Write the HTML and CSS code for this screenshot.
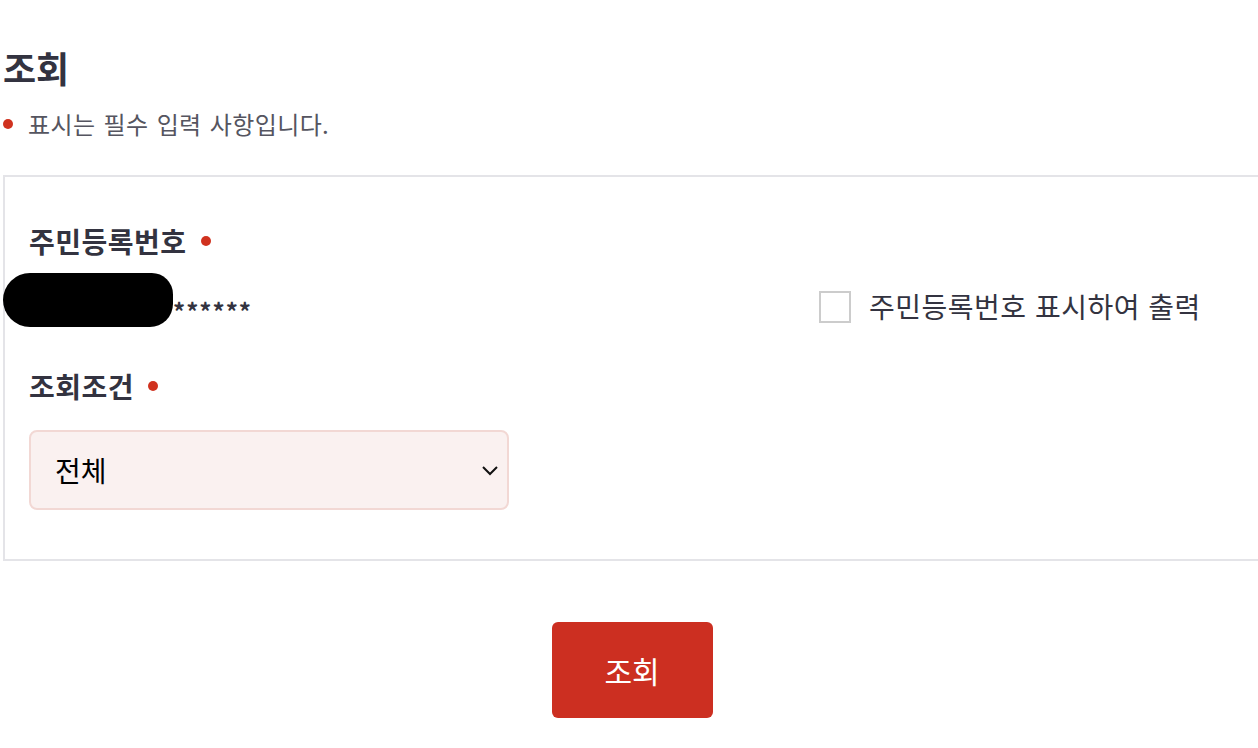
FILE: index.html
```html
<!DOCTYPE html>
<html lang="ko">
<head>
    <meta charset="UTF-8">
    <meta name="viewport" content="width=device-width, initial-scale=1.0">
    <title>조회</title>
    <link rel="stylesheet" href="styles.css">
</head>
<body>

    <div class="page">
        <h2 class="title">조회</h2>
        <p class="notice"><span class="req-dot"></span>표시는 필수 입력 사항입니다.</p>

        <form class="search-box">
            <div class="field-label">주민등록번호 <span class="req-dot"></span></div>

            <div class="id-row">
                <div class="id-value"><span class="mask"></span><span class="stars">******</span></div>
                <label class="check">
                    <input type="checkbox" class="check-input">
                    <span>주민등록번호 표시하여 출력</span>
                </label>
            </div>

            <div class="field-label second">조회조건 <span class="req-dot"></span></div>

            <select class="condition">
                <option>전체</option>
            </select>
        </form>

        <div class="actions">
            <button type="button" class="btn-search">조회</button>
        </div>
    </div>

</body>
</html>
```

FILE: styles.css
```css
/* Base */
body {
    margin: 0;
    padding: 0;
    overflow: hidden;
    background: #fff;
    color: #333340;
    font-family: 'Noto Sans CJK KR', 'Noto Sans', sans-serif;
}

.page {
    width: 1264px;
    padding-top: 43px;
}

.title {
    margin: 0 0 17px 3px;
    font-size: 36px;
    line-height: 48px;
    font-weight: 700;
}

.notice {
    display: flex;
    align-items: center;
    margin: 0 0 35px 3px;
    font-size: 24px;
    line-height: 32px;
    color: #555560;
    letter-spacing: 0.4px;
    word-spacing: 1px;
}

.notice .req-dot {
    margin-right: 15px;
}

.req-dot {
    display: inline-block;
    width: 10px;
    height: 10px;
    border-radius: 50%;
    background: #d0321f;
    vertical-align: middle;
}

/* Search box */
.search-box {
    margin-left: 3px;
    border: 2px solid #e4e4e8;
    padding: 46px 24px 49px;
}

.field-label {
    font-size: 28px;
    line-height: 36px;
    font-weight: 700;
    letter-spacing: 0.5px;
}

.field-label .req-dot {
    margin-left: 6px;
    margin-top: -8px;
}

.field-label.second {
    margin-top: 29px;
}

.id-row {
    display: grid;
    grid-template-columns: 790px 1fr;
    align-items: center;
    margin-top: 14px;
}

.id-value {
    display: flex;
    align-items: center;
    margin-left: -26px;
    font-size: 24px;
    font-weight: 700;
    letter-spacing: 1px;
}

.mask {
    display: inline-block;
    width: 170px;
    height: 54px;
    margin-bottom: 12px;
    border-radius: 28px 22px 24px 28px;
    background: #000;
}

.stars {
    padding-top: 8px;
}

.check {
    display: flex;
    align-items: center;
    gap: 18px;
    font-size: 28px;
    letter-spacing: 0.5px;
    color: #333340;
    cursor: pointer;
}

.check-input {
    appearance: none;
    margin: 2px 0 0;
    width: 32px;
    height: 32px;
    border: 2px solid #cccccc;
    background: #fff;
}

.condition {
    appearance: none;
    display: block;
    width: 480px;
    height: 80px;
    margin-top: 26px;
    padding: 0 24px;
    border: 2px solid #f2d8d4;
    border-radius: 8px;
    background: #faf1f0 url("data:image/svg+xml,%3Csvg xmlns='http://www.w3.org/2000/svg' width='18' height='12' viewBox='0 0 18 12'%3E%3Cpath d='M2 3l7 7 7-7' fill='none' stroke='%23111' stroke-width='2'/%3E%3C/svg%3E") no-repeat right 8px center;
    font-family: 'Noto Sans CJK KR', 'Noto Sans', sans-serif;
    font-size: 28px;
    color: #000;
}

/* Button */
.actions {
    display: flex;
    justify-content: center;
    margin-top: 61px;
}

.btn-search {
    width: 161px;
    height: 96px;
    border: none;
    border-radius: 6px;
    background: #cc2f21;
    color: #fff;
    font-family: 'Noto Sans CJK KR', 'Noto Sans', sans-serif;
    font-size: 30px;
    cursor: pointer;
}
```
